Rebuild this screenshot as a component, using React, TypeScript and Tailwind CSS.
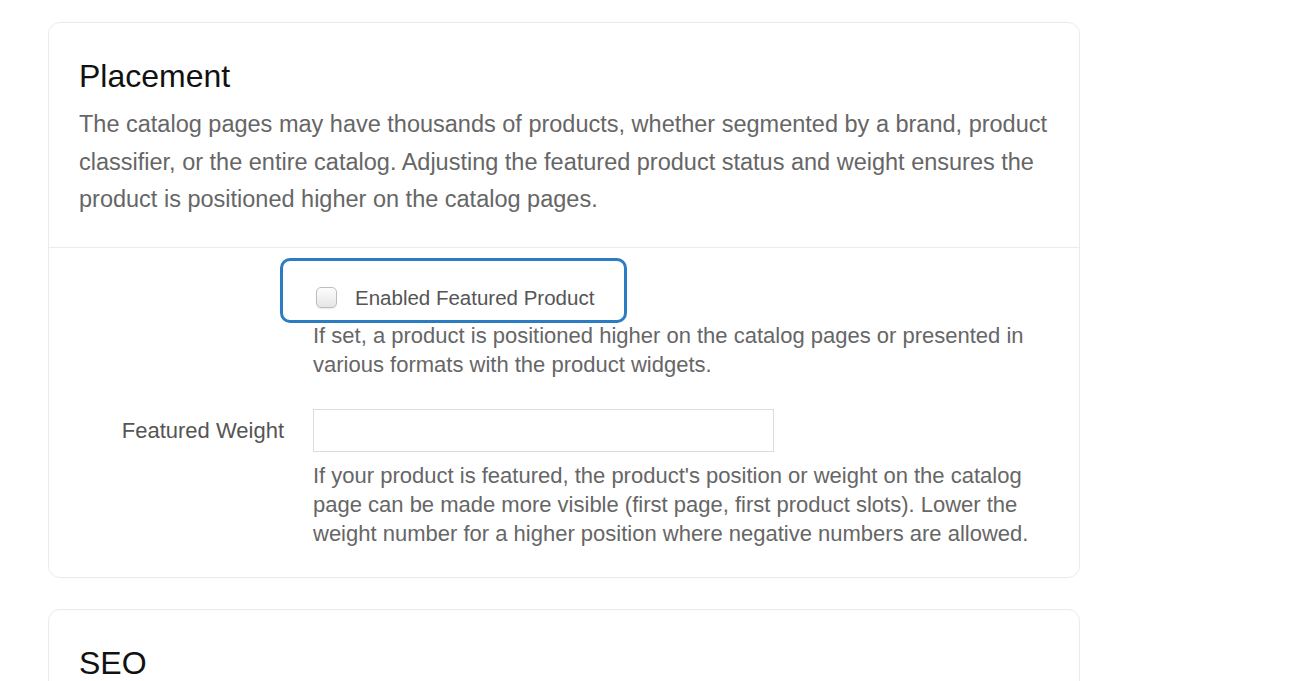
import React from "react";

const font = { fontFamily: '"Liberation Sans", Arial, sans-serif' };

export default function App() {
  return (
    <div className="min-h-screen bg-white" style={font}>
      <div className="pl-[48px] pt-[22px] w-[1080px] flex flex-col gap-[31px]">
        <div className="border border-[#ebebeb] rounded-[12px] bg-white">
          <div className="px-[30px] pt-[33px] pb-[28px] border-b border-[#ececec]">
            <h2 className="text-[32px] leading-[40px] text-[#111]">Placement</h2>
            <p className="mt-[10px] text-[23.5px] leading-[37.5px] text-[#666]">
              The catalog pages may have thousands of products, whether segmented by a brand, product
              classifier, or the entire catalog. Adjusting the featured product status and weight ensures the
              product is positioned higher on the catalog pages.
            </p>
          </div>
          <div className="pl-[30px] pr-[30px] pt-[38px] pb-[29px]">
            <div className="grid grid-cols-[205px_1fr] gap-x-[29px]">
              <div />
              <div>
                <div className="relative flex items-center h-[24px]">
                  <span className="ml-[3px] w-[21px] h-[21px] rounded-[5px] border border-[#bdbdbd] bg-gradient-to-b from-[#fdfdfd] to-[#e6e6e6] shadow-[0_1px_1px_rgba(0,0,0,0.08)]" />
                  <span className="ml-[18px] text-[20.5px] leading-[24px] text-[#555]">Enabled Featured Product</span>
                  <div className="absolute left-[-33px] top-[-28px] w-[347px] h-[65px] border-[3px] border-[#2b7cc2] rounded-[10px] pointer-events-none" />
                </div>
                <p className="mt-[11px] text-[22px] leading-[29px] text-[#666]">
                  If set, a product is positioned higher on the catalog pages or presented in various formats with
                  the product widgets.
                </p>
              </div>
              <div className="mt-[30px] flex items-center justify-end h-[43px] text-[22px] text-[#555]">
                Featured Weight
              </div>
              <div className="mt-[30px]">
                <div className="w-[461px] h-[43px] border border-[#dcdcdc] bg-white" />
                <p className="mt-[9px] text-[22px] leading-[29px] text-[#666]">
                  If your product is featured, the product's position or weight on the catalog page can be made more
                  visible (first page, first product slots). Lower the weight number for a higher position where
                  negative numbers are allowed.
                </p>
              </div>
            </div>
          </div>
        </div>
        <div className="border border-[#ebebeb] rounded-[12px] bg-white h-[200px]">
          <div className="px-[30px] pt-[33px]">
            <h2 className="text-[32px] leading-[40px] text-[#111]">SEO</h2>
          </div>
        </div>
      </div>
    </div>
  );
}
